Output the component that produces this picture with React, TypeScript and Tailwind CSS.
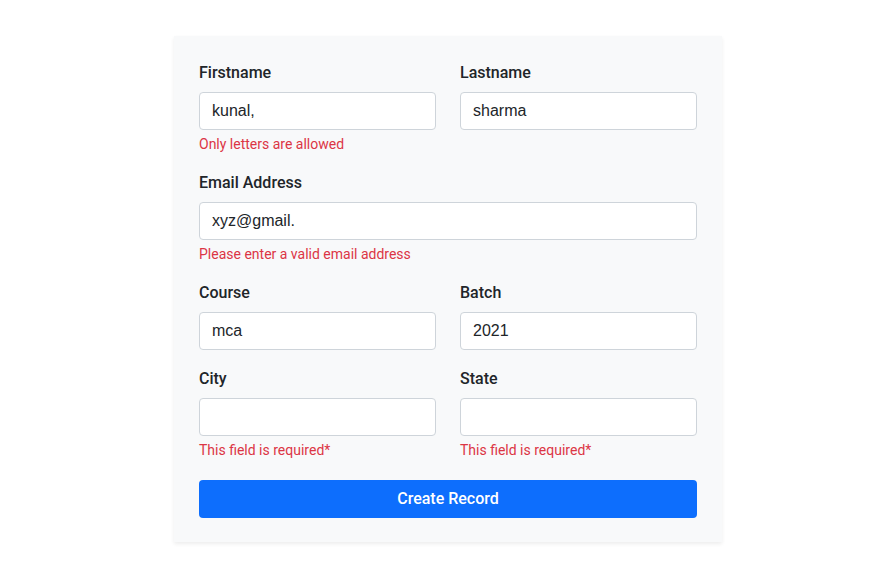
import React from 'react';

const Field: React.FC<{ label: string; value?: string; error?: string }> = ({ label, value = '', error }) => {
  return (
    <div className="mb-4">
      <label className="block text-[16px] leading-6 pt-px mb-[7px] font-medium text-[#212529]">{label}</label>
      <input
        readOnly
        value={value}
        className="block w-full h-[38px] px-3 bg-white border border-[#ced4da] rounded-[4px] text-[16px] text-[#212529] outline-none font-['Liberation_Sans',Arial,sans-serif]"
      />
      {error && <p className="mt-1 text-[14px] leading-5 text-[#dc3545]">{error}</p>}
    </div>
  );
};

const App: React.FC = () => {
  return (
    <div className="min-h-[580px] bg-white pt-9 font-['Roboto','Helvetica',sans-serif]">
      <div className="w-[548px] ml-[174px] bg-[#f8f9fa] px-[25px] pt-6 pb-6 shadow-[0_2px_4px_rgba(0,0,0,0.075)]">
        <div className="grid grid-cols-2 gap-x-6">
          <Field label="Firstname" value="kunal," error="Only letters are allowed" />
          <Field label="Lastname" value="sharma" />
        </div>
        <Field label="Email Address" value="xyz@gmail." error="Please enter a valid email address" />
        <div className="grid grid-cols-2 gap-x-6">
          <Field label="Course" value="mca" />
          <Field label="Batch" value="2021" />
        </div>
        <div className="grid grid-cols-2 gap-x-6">
          <Field label="City" error="This field is required*" />
          <Field label="State" error="This field is required*" />
        </div>
        <button className="mt-1 w-full h-[38px] rounded-[4px] bg-[#0d6efd] text-white text-[16px] font-medium">
          Create Record
        </button>
      </div>
    </div>
  );
};

export default App;
